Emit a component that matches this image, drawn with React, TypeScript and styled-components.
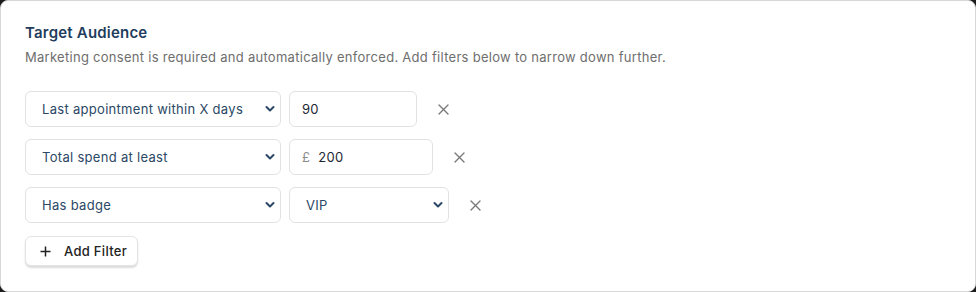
import styled, { createGlobalStyle } from "styled-components";

const Global = createGlobalStyle`
    html, body {
        margin: 0;
        padding: 0;
        background: #1c1c1c;
    }
    body {
        font-family: Inter, "Noto Sans", sans-serif;
        letter-spacing: 0.28px;
    }
`;

const Card = styled.section`
    box-sizing: border-box;
    width: 976px;
    height: 292px;
    background: #fff;
    border: 1px solid #d8d8d8;
    border-radius: 8px;
    padding: 22px 24px;
`;

const Title = styled.h2`
    margin: 0;
    font-size: 15px;
    line-height: 20px;
    font-weight: 600;
    color: #1f3d5c;
    letter-spacing: 0.2px;
`;

const Description = styled.p`
    margin: 4px 0 0;
    font-size: 13px;
    line-height: 20px;
    color: #6e6e6e;
`;

const Filters = styled.div`
    display: flex;
    flex-direction: column;
    gap: 12px;
    margin-top: 24px;
`;

const Row = styled.div`
    display: flex;
    align-items: center;
    gap: 8px;
`;

const SelectWrap = styled.div<{ $width: number }>`
    position: relative;
    width: ${p => p.$width}px;
    height: 36px;

    svg {
        position: absolute;
        right: 6px;
        top: 14px;
        pointer-events: none;
    }
`;

const Select = styled.select`
    appearance: none;
    box-sizing: border-box;
    width: 100%;
    height: 100%;
    border: 1px solid #e2e2e2;
    border-radius: 6px;
    background: #fff;
    padding: 0 28px 0 16px;
    font-family: Inter, "Noto Sans", sans-serif;
    font-size: 13px;
    letter-spacing: 0.3px;
    color: #2b4866;
    outline: none;
`;

const InputBox = styled.label<{ $width: number }>`
    box-sizing: border-box;
    display: flex;
    align-items: center;
    gap: 8px;
    width: ${p => p.$width}px;
    height: 36px;
    border: 1px solid #e2e2e2;
    border-radius: 6px;
    padding: 0 12px;
    background: #fff;
`;

const Prefix = styled.span`
    font-size: 13px;
    color: #8a8a8a;
`;

const Input = styled.input`
    border: none;
    outline: none;
    padding: 0;
    width: 100%;
    font-family: Inter, "Noto Sans", sans-serif;
    font-size: 13px;
    letter-spacing: 0.3px;
    color: #1d2733;
    background: transparent;
`;

const RemoveButton = styled.button`
    display: flex;
    align-items: center;
    justify-content: center;
    width: 28px;
    height: 28px;
    margin-left: 4px;
    border: none;
    background: none;
    padding: 0;
    cursor: pointer;
`;

const AddButton = styled.button`
    display: flex;
    align-items: center;
    gap: 13px;
    margin-top: 13px;
    height: 30px;
    padding: 0 10px 0 14px;
    background: #fff;
    border: 1px solid #e4e4e4;
    border-radius: 6px;
    box-shadow: 0 2px 2px rgba(0, 0, 0, 0.14);
    font-family: Inter, "Noto Sans", sans-serif;
    font-size: 13px;
    font-weight: 500;
    letter-spacing: 0.3px;
    color: #222;
    cursor: pointer;
`;

function Chevron() {
    return <svg width="10" height="8" viewBox="0 0 10 8">
        <path d="M1.5 2 L5 5.5 L8.5 2" fill="none" stroke="#2b4866" strokeWidth="2" strokeLinecap="round" strokeLinejoin="round"/>
    </svg>
}

function Cross() {
    return <svg width="11" height="11" viewBox="0 0 11 11">
        <path d="M1 1 L10 10 M10 1 L1 10" stroke="#7a7a7a" strokeWidth="1.4" strokeLinecap="round"/>
    </svg>
}

function Plus() {
    return <svg width="11" height="11" viewBox="0 0 11 11">
        <path d="M5.5 0.5 V10.5 M0.5 5.5 H10.5" stroke="#222" strokeWidth="1.5"/>
    </svg>
}

function FilterSelect({ width, value, options }: { width: number; value: string; options: string[] }) {
    return <SelectWrap $width={width}>
        <Select defaultValue={value}>
            {options.map(o => <option key={o}>{o}</option>)}
        </Select>
        <Chevron/>
    </SelectWrap>
}

const criteria = ["Last appointment within X days", "Total spend at least", "Has badge"];

export default function App() {
    return <>
        <Global/>
        <Card>
            <Title>Target Audience</Title>
            <Description>Marketing consent is required and automatically enforced. Add filters below to narrow down further.</Description>
            <Filters>
                <Row>
                    <FilterSelect width={256} value="Last appointment within X days" options={criteria}/>
                    <InputBox $width={128}>
                        <Input defaultValue="90"/>
                    </InputBox>
                    <RemoveButton aria-label="Remove"><Cross/></RemoveButton>
                </Row>
                <Row>
                    <FilterSelect width={256} value="Total spend at least" options={criteria}/>
                    <InputBox $width={144}>
                        <Prefix>£</Prefix>
                        <Input defaultValue="200"/>
                    </InputBox>
                    <RemoveButton aria-label="Remove"><Cross/></RemoveButton>
                </Row>
                <Row>
                    <FilterSelect width={256} value="Has badge" options={criteria}/>
                    <FilterSelect width={160} value="VIP" options={["VIP", "Regular", "New"]}/>
                    <RemoveButton aria-label="Remove"><Cross/></RemoveButton>
                </Row>
            </Filters>
            <AddButton><Plus/>Add Filter</AddButton>
        </Card>
    </>
}
